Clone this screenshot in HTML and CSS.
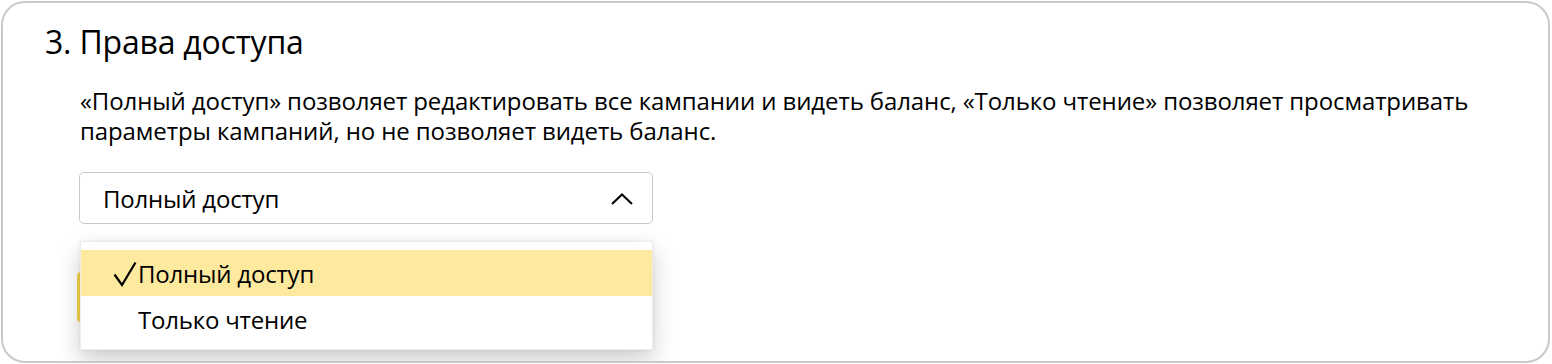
FILE: index.html
```html
<!DOCTYPE html>
<html lang="ru">
<head>
    <meta charset="UTF-8">
    <title>Права доступа</title>
    <link rel="stylesheet" href="styles.css">
</head>
<body>
    <div class="card">
        <h2 class="title">3. Права доступа</h2>

        <div class="section">
            <p class="hint">«Полный доступ» позволяет редактировать все кампании и видеть баланс, «Только чтение» позволяет просматривать параметры кампаний, но не позволяет видеть баланс.</p>

            <div class="select">
                <div class="select-value">
                    <span>Полный доступ</span>
                    <svg class="chevron" width="22" height="12" viewBox="0 0 22 12">
                        <path d="M1 11 L11 1.5 L21 11" fill="none" stroke="#000" stroke-width="2"/>
                    </svg>
                </div>

                <!-- кнопка под меню, видна только кромка -->
                <div class="submit"></div>

                <div class="menu">
                    <div class="menu-item selected">
                        <svg class="check" width="24" height="26" viewBox="0 0 24 26">
                            <path d="M1.5 13.5 L9 24 L22.5 1.5" fill="none" stroke="#000" stroke-width="2.2"/>
                        </svg>
                        Полный доступ
                    </div>
                    <div class="menu-item">Только чтение</div>
                </div>
            </div>
        </div>
    </div>
</body>
</html>
```

FILE: styles.css
```css
* {
    box-sizing: border-box;
    margin: 0;
    padding: 0;
}

body {
    background: #fff;
    font-family: 'Open Sans', 'Noto Sans', sans-serif;
    color: #000;
    padding: 1px 2px 1px 1px;
}

.card {
    height: 362px;
    border: 2px solid #c9c9c9;
    border-radius: 24px;
    padding: 20px 0 0 42px;
    overflow: hidden;
}

.title {
    font-size: 32px;
    font-weight: 400;
    line-height: 38px;
    letter-spacing: -0.2px;
}

.section {
    padding: 25px 0 0 35px;
}

.hint {
    font-size: 24px;
    line-height: 30px;
    width: 1420px;
    letter-spacing: -0.1px;
}

.select {
    position: relative;
    width: 574px;
    margin-top: 26px;
    margin-left: -1px;
}

.select-value {
    height: 52px;
    border: 1.5px solid #c8c8c8;
    border-radius: 5px;
    display: flex;
    align-items: center;
    justify-content: space-between;
    padding: 0 19px 0 23px;
    font-size: 24px;
    letter-spacing: -0.2px;
}

.chevron {
    margin-top: 1px;
}

.submit {
    margin-top: 48px;
    margin-left: -2px;
    width: 200px;
    height: 50px;
    background: #f6d54a;
    border-radius: 4px;
}

.menu {
    position: absolute;
    top: 69px;
    left: 1px;
    width: 573px;
    padding: 8px 0 7px;
    background: #fff;
    border: 1px solid #ececec;
    box-shadow: 0 10px 22px rgba(0, 0, 0, 0.2), 0 0 4px rgba(0, 0, 0, 0.06);
}

.menu-item {
    height: 46px;
    display: flex;
    align-items: center;
    padding-left: 57px;
    font-size: 24px;
    letter-spacing: -0.2px;
}

.menu-item.selected {
    background: #fdea9f;
    padding-left: 32px;
}

.check {
    margin-right: 1px;
    margin-top: 1px;
}
```
